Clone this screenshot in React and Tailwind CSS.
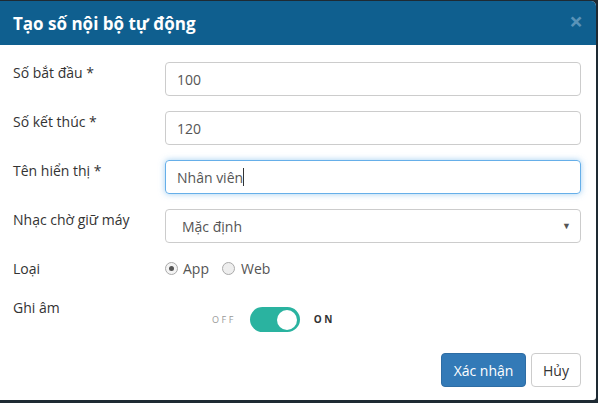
export default function App() {
  return (
    <div className="w-[598px] h-[403px] bg-[#1e2a33] font-['Open_Sans',sans-serif] pt-px">
      <div className="w-[596px] h-[399px] bg-white rounded-tr-[5px] rounded-br-[3px] overflow-hidden flex flex-col">
        <div className="h-[44px] bg-[#0f5f8f] flex items-center justify-between pl-[13px] pr-[13px] shrink-0">
          <span className="text-white text-[17px] font-bold leading-none">Tạo số nội bộ tự động</span>
          <span className="text-[#5a93b8] text-[24px] font-bold leading-none mb-[5px]">×</span>
        </div>
        <div className="flex flex-col pt-[17px] pr-[15px] text-[14px]">
          <div className="flex mb-[15px]">
            <div className="w-[165px] pl-[13px] text-[#333]">Số bắt đầu *</div>
            <div className="flex-1 h-[34px] border border-[#ccc] rounded-[4px] px-[11px] flex items-center text-[#555]">100</div>
          </div>
          <div className="flex mb-[15px]">
            <div className="w-[165px] pl-[13px] text-[#333]">Số kết thúc *</div>
            <div className="flex-1 h-[34px] border border-[#ccc] rounded-[4px] px-[11px] flex items-center text-[#555]">120</div>
          </div>
          <div className="flex mb-[15px]">
            <div className="w-[165px] pl-[13px] text-[#333]">Tên hiển thị *</div>
            <div className="flex-1 h-[34px] border border-[#66afe9] rounded-[4px] px-[11px] flex items-center text-[#555] shadow-[0_0_6px_rgba(102,175,233,0.6)]">
              Nhân viên<span className="w-px h-[18px] bg-[#333]"></span>
            </div>
          </div>
          <div className="flex mb-[15px]">
            <div className="w-[165px] pl-[13px] text-[#333]">Nhạc chờ giữ máy</div>
            <div className="flex-1 h-[34px] border border-[#ccc] rounded-[4px] pl-[16px] pr-[9px] flex items-center justify-between text-[#555]">
              <span>Mặc định</span>
              <span className="text-[9px] text-[#555]">▼</span>
            </div>
          </div>
          <div className="flex h-[20px] items-center mb-[19px]">
            <div className="w-[165px] pl-[13px] text-[#333]">Loại</div>
            <div className="flex items-center text-[#555]">
              <span className="w-[13px] h-[13px] rounded-full border border-[#aaa] bg-[#f4f4f4] flex items-center justify-center">
                <span className="w-[5px] h-[5px] rounded-full bg-[#555]"></span>
              </span>
              <span className="ml-[5px]">App</span>
              <span className="ml-[13px] w-[13px] h-[13px] rounded-full border border-[#aaa] bg-[#eee]"></span>
              <span className="ml-[6px]">Web</span>
            </div>
          </div>
          <div className="flex">
            <div className="w-[165px] pl-[13px] text-[#333]">Ghi âm</div>
            <div className="flex items-center ml-[47px] mt-[10px]">
              <span className="text-[9px] tracking-[2.5px] text-[#999]">OFF</span>
              <span className="ml-[14px] w-[50px] h-[25px] rounded-full bg-[#2ab3a0] flex items-center justify-end pr-[3px]">
                <span className="w-[20px] h-[20px] rounded-full bg-white"></span>
              </span>
              <span className="ml-[14px] text-[10px] font-bold tracking-[2.5px] text-[#333]">ON</span>
            </div>
          </div>
          <div className="flex justify-end gap-[5px] mt-[21px]">
            <div className="h-[34px] w-[85px] justify-center rounded-[4px] bg-[#337ab7] border border-[#2e6da4] text-white flex items-center">Xác nhận</div>
            <div className="h-[34px] w-[50px] justify-center rounded-[4px] bg-white border border-[#ccc] text-[#333] flex items-center">Hủy</div>
          </div>
        </div>
      </div>
    </div>
  );
}
